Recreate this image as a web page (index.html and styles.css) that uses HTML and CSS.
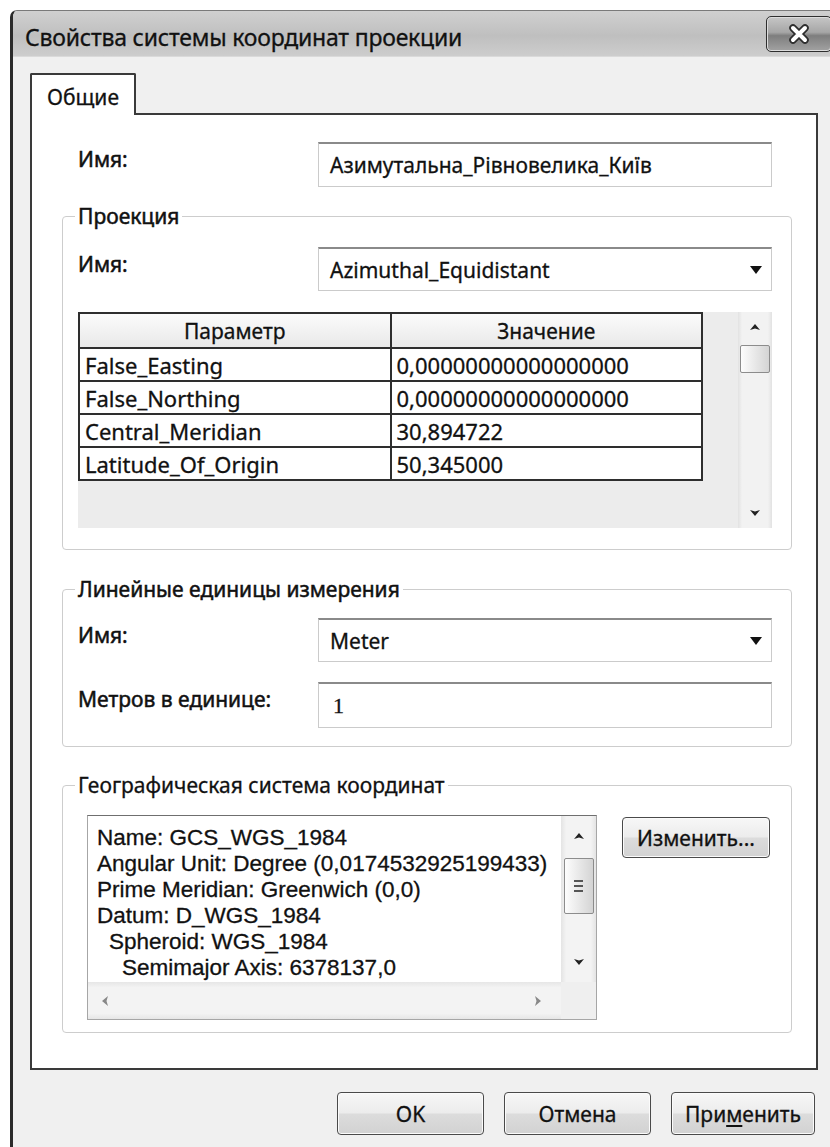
FILE: index.html
```html
<!DOCTYPE html>
<html lang="ru">
<head>
<meta charset="utf-8">
<title>Свойства системы координат проекции</title>
<link rel="stylesheet" href="styles.css">
</head>
<body>
<div class="window">
  <div class="titlebar">
    <span class="title">Свойства системы координат проекции</span>
    <button class="close" type="button" aria-label="Закрыть">
      <svg width="26" height="20" viewBox="0 0 26 20"><path d="M7 4 L19 16 M19 4 L7 16" stroke="#2e2e2e" stroke-width="7.5" stroke-linecap="round"/><path d="M7 4 L19 16 M19 4 L7 16" stroke="#fff" stroke-width="4" stroke-linecap="round"/></svg>
    </button>
  </div>

  <div class="tabs"><div class="tab">Общие</div></div>

  <div class="panel">
    <div class="row top-row">
      <label class="lbl">Имя:</label>
      <div class="field">Азимутальна_Рівновелика_Київ</div>
    </div>

    <fieldset class="group g-proj">
      <legend>Проекция</legend>
      <div class="row">
        <label class="lbl">Имя:</label>
        <div class="field combo"><span>Azimuthal_Equidistant</span>
          <svg class="drop" width="12" height="8" viewBox="0 0 12 8"><path d="M0 0H12L6 8Z" fill="#111"/></svg>
        </div>
      </div>
      <div class="listview">
        <table class="params">
          <thead>
            <tr><th>Параметр</th><th>Значение</th></tr>
          </thead>
          <tbody>
            <tr><td>False_Easting</td><td>0,00000000000000000</td></tr>
            <tr><td>False_Northing</td><td>0,00000000000000000</td></tr>
            <tr><td>Central_Meridian</td><td>30,894722</td></tr>
            <tr><td>Latitude_Of_Origin</td><td>50,345000</td></tr>
          </tbody>
        </table>
        <div class="vscroll">
          <div class="sb-btn"><svg width="10" height="6" viewBox="0 0 10 6"><path d="M0 6L5 0L10 6L5 4.5Z" fill="#222"/></svg></div>
          <div class="thumb small"></div>
          <div class="sb-fill"></div>
          <div class="sb-btn"><svg width="10" height="6" viewBox="0 0 10 6"><path d="M0 0L5 1.5L10 0L5 6Z" fill="#222"/></svg></div>
        </div>
      </div>
    </fieldset>

    <fieldset class="group g-units">
      <legend>Линейные единицы измерения</legend>
      <div class="row">
        <label class="lbl">Имя:</label>
        <div class="field combo"><span>Meter</span>
          <svg class="drop" width="12" height="8" viewBox="0 0 12 8"><path d="M0 0H12L6 8Z" fill="#111"/></svg>
        </div>
      </div>
      <div class="row row-gap">
        <label class="lbl">Метров в единице:</label>
        <div class="field tall serif">1</div>
      </div>
    </fieldset>

    <fieldset class="group g-geo">
      <legend>Географическая система координат</legend>
      <div class="geo-row">
        <div class="listbox">
          <div class="lb-text">
            <div>Name: GCS_WGS_1984</div>
            <div>Angular Unit: Degree (0,0174532925199433)</div>
            <div>Prime Meridian: Greenwich (0,0)</div>
            <div>Datum: D_WGS_1984</div>
            <div class="ind1">Spheroid: WGS_1984</div>
            <div class="ind2">Semimajor Axis: 6378137,0</div>
          </div>
          <div class="vscroll lb-v">
            <div class="sb-btn tallbtn"><svg width="10" height="6" viewBox="0 0 10 6"><path d="M0 6L5 0L10 6L5 4.5Z" fill="#222"/></svg></div>
            <div class="thumb big"><span></span><span></span><span></span></div>
            <div class="sb-fill"></div>
            <div class="sb-btn tallbtn"><svg width="10" height="6" viewBox="0 0 10 6"><path d="M0 0L5 1.5L10 0L5 6Z" fill="#222"/></svg></div>
          </div>
          <div class="hscroll">
            <svg width="6" height="10" viewBox="0 0 6 10"><path d="M6 0L0 5L6 10L4.5 5Z" fill="#888"/></svg>
            <svg width="6" height="10" viewBox="0 0 6 10"><path d="M0 0L6 5L0 10L1.5 5Z" fill="#888"/></svg>
          </div>
          <div class="corner"></div>
        </div>
        <button class="btn change" type="button">Изменить...</button>
      </div>
    </fieldset>
  </div>

  <div class="actions">
    <button class="btn act" type="button">OK</button>
    <button class="btn act" type="button">Отмена</button>
    <button class="btn act apply" type="button">При<u>м</u>енить</button>
  </div>
</div>
</body>
</html>
```

FILE: styles.css
```css
* { box-sizing: border-box; }

html, body {
  margin: 0;
  padding: 0;
  background: #fff;
}

body {
  font-family: "Noto Sans", "Open Sans", sans-serif;
  color: #111;
  -webkit-text-stroke: 0.3px #111;
}

/* dialog frame */
.window {
  margin: 10px 0 0 10px;
  width: 820px;
  height: 1137px;
  background: #f0f0f0;
  border-left: 3px solid #2b2b2b;
  border-top: 1px solid #7a7a7a;
  border-top-left-radius: 7px;
  overflow: hidden;
}

.titlebar {
  height: 46px;
  display: flex;
  align-items: flex-start;
  justify-content: space-between;
  background: linear-gradient(#d0d0d0, #bfbfbf 55%, #cdcdcd);
  border-bottom: 1px solid #dadada;
}

.title {
  font-size: 23px;
  line-height: 26px;
  margin: 13px 0 0 12px;
  color: #111;
  letter-spacing: -0.2px;
}

.close {
  width: 66px;
  height: 36px;
  margin: 5px -2px 0 0;
  padding: 0;
  border: 1px solid #2e2e2e;
  border-radius: 5px;
  background: linear-gradient(#c6c6c6, #a6a6a6 45%, #7e7e7e 55%, #a2a2a2);
  box-shadow: inset 0 0 0 1px #dcdcdc;
  display: flex;
  align-items: center;
  justify-content: center;
}

/* tab strip */
.tabs {
  display: flex;
  padding-left: 17px;
  margin-top: 16px;
}

.tab {
  width: 106px;
  height: 42px;
  margin-bottom: -2px;
  position: relative;
  z-index: 1;
  background: #fff;
  border: 2px solid #3a3a3a;
  border-bottom: none;
  border-radius: 2px 2px 0 0;
  font-size: 21px;
  line-height: 26px;
  padding-top: 9px;
  text-align: center;
}

.panel {
  margin-left: 17px;
  width: 788px;
  background: #fff;
  border: 2px solid #3a3a3a;
  padding: 27px 24px 35px 30px;
}

/* label + field rows */
.row {
  display: grid;
  grid-template-columns: 240px 454px;
  align-items: start;
}

.top-row { padding-left: 16px; }
.row-gap { margin-top: 20px; }

.lbl {
  font-size: 21px;
  line-height: 26px;
  padding-top: 4px;
  color: #111;
  -webkit-text-stroke: 0.5px #111;
}

.field {
  height: 45px;
  background: #fff;
  border: 1px solid #cbcbcb;
  border-top: 2px solid #8a8a8a;
  font-size: 21px;
  padding: 0 9px 0 11px;
  display: flex;
  align-items: center;
  justify-content: space-between;
}

.field.tall { height: 46px; }
.field.combo { height: 44px; }
.serif { font-family: "Liberation Serif", serif; font-size: 22px; padding-left: 14px; }

/* group boxes */
.group {
  margin: 17px 0 0;
  padding: 19px 19px 21px 15px;
  border: 1px solid #cdcdcd;
  border-radius: 4px;
  min-width: 0;
}

.group legend {
  font-size: 21px;
  line-height: 24px;
  padding: 0 3px;
  margin-left: -3px;
}

.g-proj legend,
.g-units legend { -webkit-text-stroke: 0.5px #111; }

.g-units { margin-top: 27px; padding-top: 17px; padding-bottom: 18px; }
.g-geo { margin-top: 26px; padding-top: 18px; padding-bottom: 12px; }

/* parameter list */
.listview {
  margin-top: 21px;
  width: 694px;
  height: 216px;
  display: flex;
  align-items: flex-start;
  background: #ececec;
}

.params {
  width: 625px;
  border-collapse: collapse;
  border: 2px solid #2e2e2e;
  font-size: 22px;
  table-layout: fixed;
}

.params th,
.params td {
  border: 2px solid #2e2e2e;
  padding: 0 5px;
  text-align: left;
  font-weight: normal;
  background: #fff;
  white-space: nowrap;
  line-height: 28px;
}

.params th {
  height: 35px;
  font-size: 21px;
  text-align: center;
  background: linear-gradient(#fbfbfb, #e9e9e9);
}

.params td { height: 33px; }

.vscroll {
  margin-left: auto;
  width: 34px;
  height: 100%;
  display: flex;
  flex-direction: column;
  align-items: center;
  background: linear-gradient(90deg, #e2e2e2, #f2f2f2 12%, #f2f2f2 88%, #e2e2e2);
}

.sb-btn {
  height: 30px;
  width: 100%;
  display: flex;
  align-items: center;
  justify-content: center;
}

.sb-fill { flex: 1; }

.thumb {
  width: 30px;
  border: 1px solid #8c8c8c;
  border-radius: 2px;
  background: linear-gradient(90deg, #fdfdfd, #e4e4e4 60%, #d4d4d4);
}

.thumb.small { height: 28px; margin-top: 3px; }

/* coordinate system listbox */
.geo-row {
  display: flex;
  align-items: flex-start;
}

.listbox {
  margin-left: 9px;
  width: 510px;
  height: 205px;
  display: grid;
  grid-template-columns: 1fr 35px;
  grid-template-rows: 1fr 37px;
  background: #fff;
  border: 1px solid #a6a6a6;
  border-top-color: #6f6f6f;
}

.lb-text {
  font-family: "Liberation Sans", Arial, sans-serif;
  font-size: 22.5px;
  line-height: 26px;
  padding: 9px 0 0 9px;
  white-space: nowrap;
  overflow: hidden;
}

.ind1 { padding-left: 12px; }
.ind2 { padding-left: 25px; }

.lb-v {
  width: 35px;
  height: auto;
  background: linear-gradient(90deg, #e4e4e4, #f3f3f3 15%, #f3f3f3 85%, #e4e4e4);
}

.sb-btn.tallbtn { height: 40px; }

.thumb.big {
  height: 56px;
  margin-top: 2px;
  display: flex;
  flex-direction: column;
  align-items: center;
  justify-content: center;
  gap: 3px;
}

.thumb.big span {
  width: 9px;
  height: 2px;
  background: #555;
}

.hscroll {
  display: flex;
  align-items: center;
  justify-content: space-between;
  padding: 0 20px 0 14px;
  background: linear-gradient(#e6e6e6, #f3f3f3 15%, #f3f3f3 85%, #e6e6e6);
}

.corner { background: #efefef; }

/* push buttons */
.btn {
  height: 43px;
  border: 1px solid #4a4a4a;
  border-radius: 4px;
  background: linear-gradient(#f7f7f7, #ececec 48%, #dcdcdc 52%, #d2d2d2);
  box-shadow: inset 0 0 0 1px #fbfbfb;
  font-family: "Noto Sans", "Open Sans", sans-serif;
  font-size: 21px;
  color: #111;
  -webkit-text-stroke: 0.3px #111;
  padding: 0;
}

.change {
  margin: 2px 0 0 25px;
  width: 148px;
  height: 41px;
}

.actions {
  display: flex;
  justify-content: flex-end;
  gap: 20px;
  margin: 22px 0 0 17px;
  width: 788px;
  padding-right: 3px;
}

.act { width: 147px; }
.apply { width: 144px; }
.apply u { text-underline-offset: 3px; }
```
